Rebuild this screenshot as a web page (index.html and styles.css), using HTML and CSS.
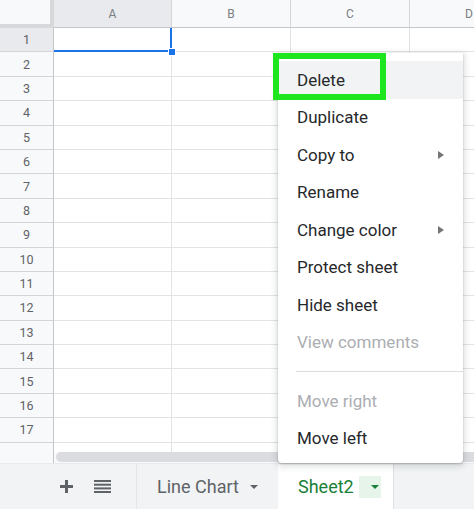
FILE: index.html
```html
<!DOCTYPE html>
<html>
<head>
<meta charset="utf-8">
<link rel="stylesheet" href="styles.css">
</head>
<body>
<div class="app">
  <div class="grid">
    <div class="row head">
      <div class="corner"></div>
      <div class="ch ca sel">A</div>
      <div class="ch cb">B</div>
      <div class="ch cc">C</div>
      <div class="ch cd">D</div>
    </div>
    <div class="row"><div class="rh sel">1</div><div class="cell ca a1"><span class="handle"></span></div><div class="cell cb"></div><div class="cell cc"></div><div class="cell cd"></div></div>
    <div class="row"><div class="rh">2</div><div class="cell ca"></div><div class="cell cb"></div><div class="cell cc"></div><div class="cell cd"></div></div>
    <div class="row"><div class="rh">3</div><div class="cell ca"></div><div class="cell cb"></div><div class="cell cc"></div><div class="cell cd"></div></div>
    <div class="row"><div class="rh">4</div><div class="cell ca"></div><div class="cell cb"></div><div class="cell cc"></div><div class="cell cd"></div></div>
    <div class="row"><div class="rh">5</div><div class="cell ca"></div><div class="cell cb"></div><div class="cell cc"></div><div class="cell cd"></div></div>
    <div class="row"><div class="rh">6</div><div class="cell ca"></div><div class="cell cb"></div><div class="cell cc"></div><div class="cell cd"></div></div>
    <div class="row"><div class="rh">7</div><div class="cell ca"></div><div class="cell cb"></div><div class="cell cc"></div><div class="cell cd"></div></div>
    <div class="row"><div class="rh">8</div><div class="cell ca"></div><div class="cell cb"></div><div class="cell cc"></div><div class="cell cd"></div></div>
    <div class="row"><div class="rh">9</div><div class="cell ca"></div><div class="cell cb"></div><div class="cell cc"></div><div class="cell cd"></div></div>
    <div class="row"><div class="rh">10</div><div class="cell ca"></div><div class="cell cb"></div><div class="cell cc"></div><div class="cell cd"></div></div>
    <div class="row"><div class="rh">11</div><div class="cell ca"></div><div class="cell cb"></div><div class="cell cc"></div><div class="cell cd"></div></div>
    <div class="row"><div class="rh">12</div><div class="cell ca"></div><div class="cell cb"></div><div class="cell cc"></div><div class="cell cd"></div></div>
    <div class="row"><div class="rh">13</div><div class="cell ca"></div><div class="cell cb"></div><div class="cell cc"></div><div class="cell cd"></div></div>
    <div class="row"><div class="rh">14</div><div class="cell ca"></div><div class="cell cb"></div><div class="cell cc"></div><div class="cell cd"></div></div>
    <div class="row"><div class="rh">15</div><div class="cell ca"></div><div class="cell cb"></div><div class="cell cc"></div><div class="cell cd"></div></div>
    <div class="row"><div class="rh">16</div><div class="cell ca"></div><div class="cell cb"></div><div class="cell cc"></div><div class="cell cd"></div></div>
    <div class="row"><div class="rh">17</div><div class="cell ca"></div><div class="cell cb"></div><div class="cell cc"></div><div class="cell cd"></div></div>
    <div class="row"><div class="rh"></div><div class="cell ca"></div><div class="cell cb"></div><div class="cell cc"></div><div class="cell cd"></div></div>
  </div>

  <div class="hscroll">
    <div class="hs-gutter"></div>
    <div class="hs-track"><div class="thumb"></div></div>
  </div>

  <div class="tabs">
    <div class="tools">
      <svg class="plus" width="13" height="13" viewBox="0 0 13 13"><rect x="5" y="0" width="3" height="13" fill="#5f6368"/><rect x="0" y="5" width="13" height="3" fill="#5f6368"/></svg>
      <svg class="list" width="17" height="13" viewBox="0 0 17 13"><rect x="0" y="0" width="17" height="2" fill="#5f6368"/><rect x="0" y="3.7" width="17" height="2" fill="#5f6368"/><rect x="0" y="7.4" width="17" height="2" fill="#5f6368"/><rect x="0" y="11" width="17" height="2" fill="#5f6368"/></svg>
    </div>
    <div class="tab">Line Chart<span class="caret"></span></div>
    <div class="tab active">Sheet2<span class="caret-box"><span class="caret green"></span></span></div>
  </div>

  <div class="menu">
    <div class="item hover">Delete</div>
    <div class="item">Duplicate</div>
    <div class="item">Copy to<span class="arrow"></span></div>
    <div class="item">Rename</div>
    <div class="item">Change color<span class="arrow"></span></div>
    <div class="item">Protect sheet</div>
    <div class="item">Hide sheet</div>
    <div class="item disabled">View comments</div>
    <div class="sep"></div>
    <div class="item disabled">Move right</div>
    <div class="item">Move left</div>
  </div>

  <div class="highlight"></div>
</div>
</body>
</html>
```

FILE: styles.css
```css
* { box-sizing: border-box; }

body {
  margin: 0;
  font-family: Roboto, "Liberation Sans", Arial, sans-serif;
  background: #fff;
}

.app {
  position: relative;
  width: 474px;
  height: 509px;
  overflow: hidden;
  display: flex;
  flex-direction: column;
  background: #fff;
}

/* ---------- grid ---------- */
.grid {
  height: 452px;
  flex: none;
  overflow: hidden;
}

.row {
  display: flex;
  height: 24.4px;
}

.row.head { height: 28px; }

.corner {
  width: 54px;
  flex: none;
  background: #f8f9fa;
  border-right: 4px solid #d6d8da;
  border-bottom: 4px solid #d6d8da;
}

.ca { width: 118px; }
.cb { width: 119px; }
.cc { width: 119px; }
.cd { width: 119px; }

.ch {
  flex: none;
  display: flex;
  align-items: center;
  justify-content: center;
  font-size: 12px;
  color: #7a7e83;
  background: #f8f9fa;
  border-right: 1px solid #d3d5d7;
  border-bottom: 1px solid #c4c6c8;
}

.ch.sel { background: #e8eaed; }

.rh {
  width: 54px;
  flex: none;
  display: flex;
  align-items: center;
  justify-content: center;
  font-size: 12.5px;
  color: #5f6368;
  background: #f8f9fa;
  border-right: 1px solid #c4c6c8;
  border-bottom: 1px solid #d3d5d7;
}

.rh.sel { background: #e8eaed; }

.cell {
  flex: none;
  border-right: 1px solid #e2e3e3;
  border-bottom: 1px solid #e2e3e3;
}

.a1 {
  position: relative;
}

.a1::after {
  content: "";
  position: absolute;
  left: 0;
  top: 0;
  right: -1px;
  bottom: -1px;
  border-right: 2px solid #1a73e8;
  border-bottom: 2px solid #1a73e8;
}

.handle {
  position: absolute;
  right: -5px;
  bottom: -5px;
  width: 8px;
  height: 8px;
  background: #1a73e8;
  border: 1px solid #fff;
  z-index: 1;
}

/* ---------- horizontal scroll ---------- */
.hscroll {
  height: 11px;
  flex: none;
  display: flex;
  background: #f8f9fa;
}

.hs-gutter {
  width: 54px;
  flex: none;
  background: #f8f9fa;
  border-right: 1px solid #c4c6c8;
}

.hs-track {
  flex: 1;
  padding: 0 0 1px 2px;
}

.thumb {
  height: 100%;
  background: #dadce0;
  border-radius: 5px 0 0 5px;
}

/* ---------- tabs ---------- */
.tabs {
  height: 46px;
  flex: none;
  display: flex;
  background: #f1f3f4;
  border-top: 1px solid #e8eaed;
}

.tools {
  width: 137px;
  flex: none;
  display: flex;
  align-items: center;
  padding-left: 60px;
  gap: 21px;
  border-right: 1px solid #e3e5e7;
}

.tab {
  display: flex;
  align-items: center;
  padding-left: 20px;
  font-size: 18px;
  color: #5f6368;
  width: 141px;
  flex: none;
}

.tab .caret { margin-left: 11px; }

.caret {
  width: 0;
  height: 0;
  border-left: 4px solid transparent;
  border-right: 4px solid transparent;
  border-top: 4px solid #5f6368;
}

.tab.active {
  width: 115px;
  background: #fff;
  color: #188038;
  box-shadow: 1px 0 0 #dfe1e3;
}

.caret-box {
  margin-left: 5px;
  width: 22px;
  height: 22px;
  background: #e6f4ea;
  display: flex;
  align-items: center;
  justify-content: center;
}

.caret.green { border-top-color: #188038; }

/* ---------- context menu ---------- */
.menu {
  position: absolute;
  left: 278px;
  top: 53px;
  width: 185px;
  padding: 8px 0 6px;
  background: #fff;
  border-radius: 0 0 4px 4px;
  box-shadow: 0 2px 6px 2px rgba(60, 64, 67, 0.15), 0 1px 2px rgba(60, 64, 67, 0.3);
  z-index: 2;
}

.item {
  height: 37.5px;
  display: flex;
  align-items: center;
  justify-content: space-between;
  padding: 0 19px;
  font-size: 17px;
  color: #26282b;
}

.item.hover { background: #f1f3f4; }

.item.disabled { color: #abaeb2; }

.arrow {
  width: 0;
  height: 0;
  border-left: 6px solid #757575;
  border-top: 4px solid transparent;
  border-bottom: 4px solid transparent;
}

.sep {
  height: 21px;
  display: flex;
  align-items: center;
  padding-left: 18px;
}

.sep::before {
  content: "";
  flex: 1;
  height: 1px;
  background: #dadce0;
}

/* ---------- annotation ---------- */
.highlight {
  position: absolute;
  left: 273px;
  top: 53px;
  width: 113px;
  height: 47px;
  border: 6px solid #1ee61e;
  z-index: 3;
}
```
